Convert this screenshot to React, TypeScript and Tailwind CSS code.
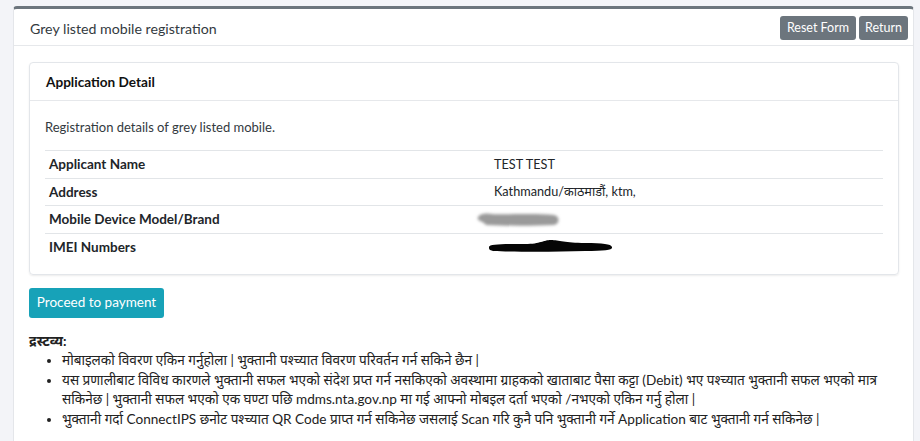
import React from "react";

const rows = [
  { label: "Applicant Name", value: "TEST TEST" },
  { label: "Address", value: "Kathmandu/काठमाडौं, ktm," },
  { label: "Mobile Device Model/Brand", value: "grey" },
  { label: "IMEI Numbers", value: "black" },
];

function GreyScribble() {
  return (
    <svg width="90" height="20" viewBox="0 0 90 20" className="-ml-[20px]">
      <defs>
        <filter id="blurA" x="-20%" y="-50%" width="140%" height="200%">
          <feGaussianBlur stdDeviation="1.6" />
        </filter>
      </defs>
      <path
        d="M4 8 C6 4 14 4 18 5 C30 6 60 4 80 6 C86 7 86 15 80 16 C60 17 30 17 12 16 C9 12 2 12 4 8 Z"
        fill="#9a9a9a"
        filter="url(#blurA)"
      />
    </svg>
  );
}

function BlackScribble() {
  return (
    <svg width="130" height="18" viewBox="0 0 130 18" className="-ml-[9px]">
      <path
        d="M4 9 C4 6 20 6 40 6 C56 6 58 2 66 2 C74 2 80 5 100 5 C118 5 126 6 127 9 C128 12 120 13 100 13 C70 14 30 14 8 13 C4 12 4 11 4 9 Z"
        fill="#050505"
      />
    </svg>
  );
}

export default function App() {
  return (
    <div
      className="h-[441px] overflow-hidden bg-[#f3f4f8] pl-[13px] pt-[6px]"
      style={{ fontFamily: "Lato, 'Noto Sans', sans-serif" }}
    >
      <div className="w-[901px] h-[440px] bg-white rounded-t-[4px] border-t-[3px] border-[#6c757d] border-x border-x-[#e4e6ea]">
        <div className="h-[37px] flex items-center justify-between pl-[16px] pr-[5px] border-b border-[#e6e8eb]">
          <span className="mt-[3px] text-[14.2px] text-[#333a40]">Grey listed mobile registration</span>
          <div className="mt-[2px] flex gap-[3px]">
            <button className="h-[24px] px-[7px] rounded-[3px] bg-[#6c757d] text-white text-[12.5px]">
              Reset Form
            </button>
            <button className="h-[24px] px-[6px] rounded-[3px] bg-[#6c757d] text-white text-[12.5px]">
              Return
            </button>
          </div>
        </div>

        <div className="px-[15px] pt-[16px]">
          <div className="w-[870px] rounded-[4px] border border-[#e3e6ea] shadow-[0_1px_2px_rgba(0,0,0,0.08)]">
            <div className="h-[38px] flex items-center px-[16px] border-b border-[#e6e8eb]">
              <span className="mt-[2px] text-[13.6px] font-bold text-[#111]">Application Detail</span>
            </div>
            <div className="px-[15px] pb-[13px]">
              <p className="mt-[17px] text-[13px] text-[#333a40] leading-[18px]">
                Registration details of grey listed mobile.
              </p>
              <table className="mt-[14px] w-[838px] text-[13px] text-[#212529]">
                <tbody>
                  {rows.map((r) => (
                    <tr key={r.label} className="h-[27.5px] border-t border-[#e2e5e8]">
                      <td className="w-[445px] px-[4px] font-bold text-[13.5px]">{r.label}</td>
                      <td className="px-[4px] text-[12.7px]">
                        {r.value === "grey" ? (
                          <GreyScribble />
                        ) : r.value === "black" ? (
                          <BlackScribble />
                        ) : (
                          r.value
                        )}
                      </td>
                    </tr>
                  ))}
                </tbody>
              </table>
            </div>
          </div>

          <button className="mt-[13px] h-[30px] w-[135px] rounded-[3px] bg-[#17a2b8] text-white text-[13.5px]">
            Proceed to payment
          </button>

          <div className="mt-[14px] text-[13.6px] text-[#222] leading-[19.5px]">
            <div className="font-bold">द्रस्टव्य:</div>
            <ul className="list-disc pl-[33px]">
              <li>मोबाइलको विवरण एकिन गर्नुहोला | भुक्तानी पश्च्यात विवरण परिवर्तन गर्न सकिने छैन |</li>
              <li>
                यस प्रणालीबाट विविध कारणले भुक्तानी सफल भएको संदेश प्रप्त गर्न नसकिएको अवस्थामा ग्राहकको खाताबाट पैसा कट्टा (Debit) भए पश्च्यात भुक्तानी सफल भएको मात्र सकिनेछ | भुक्तानी सफल भएको एक घण्टा पछि mdms.nta.gov.np मा गई आफ्नो मोबइल दर्ता भएको /नभएको एकिन गर्नु होला |
              </li>
              <li>
                भुक्तानी गर्दा ConnectIPS छनोट पश्च्यात QR Code प्राप्त गर्न सकिनेछ जसलाई Scan गरि कुनै पनि भुक्तानी गर्ने Application बाट भुक्तानी गर्न सकिनेछ |
              </li>
            </ul>
          </div>
        </div>
      </div>
    </div>
  );
}
